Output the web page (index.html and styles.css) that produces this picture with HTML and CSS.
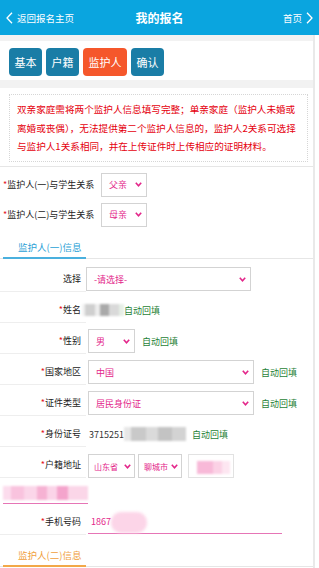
FILE: index.html
```html
<!DOCTYPE html>
<html lang="zh">
<head>
<meta charset="utf-8">
<title>我的报名</title>
<link rel="stylesheet" href="styles.css">
</head>
<body>
<header class="header">
  <a class="back"><svg viewBox="0 0 7 12" class="chev"><polyline points="6,0.7 1,6 6,11.3"/></svg>返回报名主页</a>
  <div class="title">我的报名</div>
  <a class="home">首页<svg viewBox="0 0 7 12" class="chev"><polyline points="1,0.7 6,6 1,11.3"/></svg></a>
</header>
<div class="page">
  <div class="band"></div>
  <nav class="steps">
    <span class="step">基本</span>
    <span class="step">户籍</span>
    <span class="step on">监护人</span>
    <span class="step">确认</span>
  </nav>
  <div class="band band-lg"></div>
  <div class="notice-wrap">
    <p class="notice">双亲家庭需将两个监护人信息填写完整；单亲家庭（监护人未婚或<br>离婚或丧偶），无法提供第二个监护人信息的，监护人2关系可选择<br>与监护人1关系相同，并在上传证件时上传相应的证明材料。</p>
  </div>

  <div class="rel">
    <span class="rel-lbl"><i>*</i>监护人(一)与学生关系</span>
    <div class="sel w46"><span class="val">父亲</span><svg class="arr" viewBox="0 0 7 5"><polyline points="0.8,0.8 3.5,3.8 6.2,0.8"/></svg></div>
  </div>
  <div class="rel">
    <span class="rel-lbl"><i>*</i>监护人(二)与学生关系</span>
    <div class="sel w46"><span class="val">母亲</span><svg class="arr" viewBox="0 0 7 5"><polyline points="0.8,0.8 3.5,3.8 6.2,0.8"/></svg></div>
  </div>

  <div class="sec"><span class="sec-tab blue">监护人(一)信息</span></div>

  <div class="row row-first">
    <div class="lbl">选择</div>
    <div class="field f-tight">
      <div class="sel w165"><span class="val">-请选择-</span><svg class="arr" viewBox="0 0 7 5"><polyline points="0.8,0.8 3.5,3.8 6.2,0.8"/></svg></div>
    </div>
  </div>
  <div class="row">
    <div class="lbl"><i>*</i>姓名</div>
    <div class="field f-name">
      <div class="blur blur-name"></div><span class="auto">自动回填</span>
    </div>
  </div>
  <div class="row">
    <div class="lbl"><i>*</i>性别</div>
    <div class="field">
      <div class="sel w47"><span class="val">男</span><svg class="arr" viewBox="0 0 7 5"><polyline points="0.8,0.8 3.5,3.8 6.2,0.8"/></svg></div>
      <span class="auto">自动回填</span>
    </div>
  </div>
  <div class="row">
    <div class="lbl"><i>*</i>国家地区</div>
    <div class="field">
      <div class="sel w166"><span class="val">中国</span><svg class="arr" viewBox="0 0 7 5"><polyline points="0.8,0.8 3.5,3.8 6.2,0.8"/></svg></div>
      <span class="auto">自动回填</span>
    </div>
  </div>
  <div class="row">
    <div class="lbl"><i>*</i>证件类型</div>
    <div class="field">
      <div class="sel w166"><span class="val">居民身份证</span><svg class="arr" viewBox="0 0 7 5"><polyline points="0.8,0.8 3.5,3.8 6.2,0.8"/></svg></div>
      <span class="auto">自动回填</span>
    </div>
  </div>
  <div class="row">
    <div class="lbl"><i>*</i>身份证号</div>
    <div class="field f-id">
      <span class="idnum">3715251</span><div class="blur blur-id"></div><span class="auto">自动回填</span>
    </div>
  </div>
  <div class="row">
    <div class="lbl"><i>*</i>户籍地址</div>
    <div class="field f-addr">
      <div class="sel w47"><span class="val">山东省</span><svg class="arr" viewBox="0 0 7 5"><polyline points="0.8,0.8 3.5,3.8 6.2,0.8"/></svg></div>
      <div class="sel w44"><span class="val">聊城市</span><svg class="arr" viewBox="0 0 7 5"><polyline points="0.8,0.8 3.5,3.8 6.2,0.8"/></svg></div>
      <div class="box46"><div class="blur blur-pink-sm"></div></div>
    </div>
  </div>
  <div class="addr-extra">
    <div class="pink-input"><div class="blur blur-pink"></div></div>
  </div>
  <div class="row">
    <div class="lbl"><i>*</i>手机号码</div>
    <div class="field">
      <div class="phone"><span class="ph-num">1867</span><span class="ph-blob"></span></div>
    </div>
  </div>

  <div class="sec"><span class="sec-tab orange">监护人(二)信息</span></div>
</div>
</body>
</html>
```

FILE: styles.css
```css
* { box-sizing: border-box; margin: 0; padding: 0; }
html, body { background: #fff; }
body {
  width: 319px;
  height: 568px;
  overflow: hidden;
  font-family: "Noto Sans CJK SC", "Noto Sans", sans-serif;
  font-size: 9px;
  color: #222;
}
i { font-style: normal; color: #e4151f; }

.header {
  height: 35px;
  background: #0aa5df;
  color: #fff;
  display: grid;
  grid-template-columns: 1fr auto 1fr;
  align-items: center;
}
.chev { width: 7px; height: 12px; fill: none; stroke: #fff; stroke-width: 1.3; }
.back { display: flex; align-items: center; gap: 4px; padding-left: 6px; font-size: 9.5px; }
.title { font-size: 12px; font-weight: bold; }
.home { justify-self: end; display: flex; align-items: center; gap: 4px; padding-right: 6px; font-size: 9.5px; }

.page { width: 315px; border-right: 2px solid #e9e9e9; min-height: 533px; }
.band { height: 6px; background: #f2f2f2; }
.band-lg { height: 8px; }

.steps { display: flex; gap: 4px; height: 39px; padding: 7px 9px 4px; }
.step {
  height: 28px;
  line-height: 28px;
  padding: 0 5.5px;
  background: #1a7da6;
  color: #fff;
  border-radius: 4px;
  font-size: 11px;
}
.step.on { background: #f5572b; }

.notice-wrap { padding: 6px 5px 4px 9px; border-bottom: 1px solid #e6e6e6; }
.notice {
  border: 1px dotted #d6d6d6;
  padding: 5px 4px 5px 7px;
  color: #e5000d;
  font-size: 9.6px;
  line-height: 18.5px;
  white-space: nowrap;
  overflow: hidden;
}

.rel { display: flex; align-items: center; height: 30px; padding: 6px 0 0 3px; }
.rel-lbl { width: 98px; }

.sel {
  height: 24px;
  border: 1px solid #d3d3d3;
  background: #fff;
  display: flex;
  align-items: center;
  gap: 2px;
  justify-content: space-between;
  padding: 0 4px 0 7px;
  color: #e3268a;
  flex: none;
  overflow: hidden;
}
.val { white-space: nowrap; }
.arr { width: 7px; height: 5px; fill: none; stroke: #e3268a; stroke-width: 1.6; flex: none; }
.w46 { width: 46px; }
.w47 { width: 47px; }
.w44 { width: 44px; }
.w165 { width: 165px; }
.w166 { width: 166px; }
.f-addr .sel { padding: 0 3px 0 5px; font-size: 8px; }

.sec { height: 32px; display: flex; align-items: flex-end; border-bottom: 1px solid #e6e6e6; }
.sec-tab {
  margin: 0 0 -1px 3px;
  padding: 0 3px 3px 15px;
  width: 83px;
  line-height: 14px;
  font-size: 9.5px;
  border-bottom: 2px solid;
}
.blue { color: #2a9fd6; border-color: #4ab0de; }
.orange { color: #f0a03c; border-color: #f2a848; }

.row { display: flex; }
.row-first { margin-top: 2px; }
.lbl {
  width: 86px;
  flex: none;
  height: 31px;
  padding: 6px 5px 0 0;
  display: flex;
  align-items: center;
  justify-content: flex-end;
  border-bottom: 1px solid #eeeeee;
}
.field { display: flex; align-items: center; gap: 7px; padding: 6px 0 0 2px; height: 31px; }
.f-tight { padding-left: 0; }
.f-name { gap: 0; padding-left: 0; margin-left: -4px; }
.f-id { gap: 0; padding-left: 3px; }
.f-addr { gap: 3px; padding-top: 8px; }
.auto { color: #1f7f36; white-space: nowrap; }

.blur { filter: blur(1.2px); }
.blur-name {
  width: 42px;
  height: 12px;
  background: linear-gradient(90deg, #f2f2f2 0 8%, #cfcfcf 8% 30%, #ededed 30% 42%, #a9a9a9 42% 64%, #d9d9d9 64% 88%, #e6efe6 88% 100%);
}
.idnum { color: #333; }
.blur-id {
  width: 62px;
  height: 14px;
  margin-right: 6px;
  background: linear-gradient(90deg, #e7e7e7 0 12%, #c9c9c9 12% 35%, #dadada 35% 55%, #c3c3c3 55% 78%, #d3d3d3 78% 100%);
}
.box46 {
  width: 46px;
  height: 24px;
  border: 1px solid #e2e2e2;
  margin-left: 3px;
  padding: 6px 3px 3px 8px;
}
.blur-pink-sm {
  width: 33px;
  height: 13px;
  background: linear-gradient(90deg, #f8b9d8 0 50%, #fbd1e5 50% 75%, #fde6f1 75% 100%);
}
.addr-extra { padding: 7px 0 0 3px; height: 26px; }
.pink-input { width: 85px; height: 19px; border-bottom: 1px solid #e675b6; padding-top: 1px; }
.blur-pink {
  width: 85px;
  height: 14px;
  background: linear-gradient(90deg, #fcdced 0 10%, #f9c3de 10% 25%, #fbd6e9 25% 40%, #f6b2d3 40% 52%, #fbd4e8 52% 64%, #f4a4cc 64% 76%, #fbd6e8 76% 100%);
}
.phone {
  width: 194px;
  height: 24px;
  border-bottom: 1px solid #e675b6;
  display: flex;
  align-items: center;
  padding-left: 3px;
  color: #e3268a;
}
.ph-blob {
  width: 36px;
  height: 21px;
  margin-top: 2px;
  border-radius: 10px;
  background: #fcd5e8;
  filter: blur(1.5px);
}
```
